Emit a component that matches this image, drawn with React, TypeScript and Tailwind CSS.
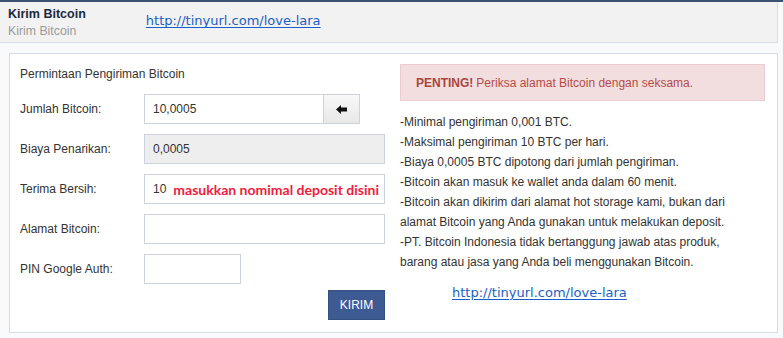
import type { ReactNode } from 'react';

const sans = "font-['Liberation_Sans',Arial,sans-serif]";
const linkCls =
  "font-['DejaVu_Sans',Verdana,sans-serif] text-[13px] text-[#1a5fc9] underline underline-offset-2";

function ArrowLeft() {
  return (
    <svg width="11" height="9" viewBox="0 0 11 9" aria-hidden>
      <path d="M0 4.5 L5 0 L5 2.5 L11 2.5 L11 6.5 L5 6.5 L5 9 Z" fill="#111" />
    </svg>
  );
}

function Row({ label, children }: { label: string; children: ReactNode }) {
  return (
    <div className="flex items-center h-[30px]">
      <div className="w-[124px] shrink-0 text-[12px] text-[#333]">{label}</div>
      {children}
    </div>
  );
}

const inputCls = 'h-[30px] border border-[#ccd3dc] flex items-center px-[8px] text-[12px] text-[#333]';

const notes = [
  '-Minimal pengiriman 0,001 BTC.',
  '-Maksimal pengiriman 10 BTC per hari.',
  '-Biaya 0,0005 BTC dipotong dari jumlah pengiriman.',
  '-Bitcoin akan masuk ke wallet anda dalam 60 menit.',
  '-Bitcoin akan dikirim dari alamat hot storage kami, bukan dari',
  'alamat Bitcoin yang Anda gunakan untuk melakukan deposit.',
  '-PT. Bitcoin Indonesia tidak bertanggung jawab atas produk,',
  'barang atau jasa yang Anda beli menggunakan Bitcoin.',
];

export default function App() {
  return (
    <div className={`w-[783px] h-[338px] bg-[#f9fafb] overflow-hidden ${sans}`}>
      <div className="h-[2px] bg-[#3a5171]" />

      {/* Page header */}
      <div className="w-[778px] h-[41px] bg-[#f2f2f2] border-b border-r border-[#d5dde8] flex items-center px-[8px]">
        <div className="flex flex-col leading-[17px] pt-[1px]">
          <span className="text-[12.5px] font-bold text-[#1b2a3f]">Kirim Bitcoin</span>
          <span className="text-[12.3px] text-[#9a9a9a]">Kirim Bitcoin</span>
        </div>
        <a className={`${linkCls} ml-[60px] mb-[2px]`}>http://tinyurl.com/love-lara</a>
      </div>

      {/* Main panel */}
      <div className="ml-[9px] mt-[10px] w-[769px] h-[280px] bg-white border border-[#d5dde8] flex">
        {/* Form */}
        <div className="w-[375px] pl-[10px] pt-[13px] flex flex-col">
          <div className="text-[12px] text-[#333] leading-[14px] mb-[13px]">Permintaan Pengiriman Bitcoin</div>
          <div className="flex flex-col gap-[10px]">
            <Row label="Jumlah Bitcoin:">
              <div className={`${inputCls} w-[180px] bg-white`}>10,0005</div>
              <div className="h-[30px] w-[37px] -ml-[1px] border border-[#ccd3dc] bg-gradient-to-b from-[#f8f8f8] to-[#e8e8e8] flex items-center justify-center">
                <ArrowLeft />
              </div>
            </Row>
            <Row label="Biaya Penarikan:">
              <div className={`${inputCls} w-[241px] bg-[#eeeeee]`}>0,0005</div>
            </Row>
            <Row label="Terima Bersih:">
              <div className={`${inputCls} w-[241px] bg-white whitespace-nowrap`}>
                <span>10</span>
                <span className="ml-[7px] font-['Lato',sans-serif] font-bold text-[14px] text-[#f01c3c]">
                  masukkan nomimal deposit disini
                </span>
              </div>
            </Row>
            <Row label="Alamat Bitcoin:">
              <div className={`${inputCls} w-[241px] bg-white`} />
            </Row>
            <Row label="PIN Google Auth:">
              <div className={`${inputCls} w-[97px] bg-white`} />
            </Row>
          </div>
          <div className="flex justify-end w-[365px] mt-[6px]">
            <button className="h-[30px] w-[57px] bg-[#3e5a93] border border-[#34507f] text-white text-[12px]">KIRIM</button>
          </div>
        </div>

        {/* Info column */}
        <div className="w-[365px] ml-[15px] pt-[10px] flex flex-col">
          <div className="h-[37px] bg-[#f2dede] border border-[#ebccd1] flex items-center pl-[15px] text-[12px] text-[#b94a48]">
            <span className="font-bold text-[#a94442]">PENTING!</span>
            <span className="ml-[3px]">Periksa alamat Bitcoin dengan seksama.</span>
          </div>
          <div className="mt-[11px] text-[12px] leading-[20px] text-[#333]">
            {notes.map((n) => (
              <div key={n}>{n}</div>
            ))}
          </div>
          <a className={`${linkCls} ml-[52px] mt-[11px] leading-[20px]`}>http://tinyurl.com/love-lara</a>
        </div>
      </div>
    </div>
  );
}
